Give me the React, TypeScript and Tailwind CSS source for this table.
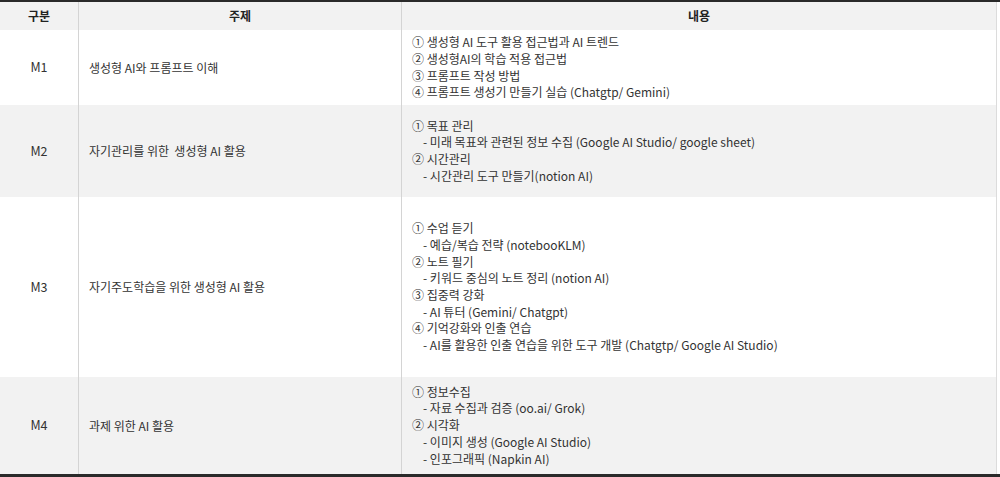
import React from "react";

type Row = { id: string; subject: string; lines: string[]; h: string; bg: string };

const rows: Row[] = [
  {
    id: "M1",
    subject: "생성형 AI와 프롬프트 이해",
    lines: [
      "① 생성형 AI 도구 활용 접근법과 AI 트렌드",
      "② 생성형AI의 학습 적용 접근법",
      "③ 프롬프트 작성 방법",
      "④ 프롬프트 생성기 만들기 실습 (Chatgtp/ Gemini)",
    ],
    h: "h-[75px]",
    bg: "bg-white",
  },
  {
    id: "M2",
    subject: "자기관리를 위한  생성형 AI 활용",
    lines: [
      "① 목표 관리",
      "- 미래 목표와 관련된 정보 수집 (Google AI Studio/ google sheet)",
      "② 시간관리",
      "- 시간관리 도구 만들기(notion AI)",
    ],
    h: "h-[92px]",
    bg: "bg-[#f2f2f2]",
  },
  {
    id: "M3",
    subject: "자기주도학습을 위한 생성형 AI 활용",
    lines: [
      "① 수업 듣기",
      "- 예습/복습 전략 (notebooKLM)",
      "② 노트 필기",
      "- 키워드 중심의 노트 정리 (notion AI)",
      "③ 집중력 강화",
      "- AI 튜터 (Gemini/ Chatgpt)",
      "④ 기억강화와 인출 연습",
      "- AI를 활용한 인출 연습을 위한 도구 개발 (Chatgtp/ Google AI Studio)",
    ],
    h: "h-[180px]",
    bg: "bg-white",
  },
  {
    id: "M4",
    subject: "과제 위한 AI 활용",
    lines: [
      "① 정보수집",
      "- 자료 수집과 검증 (oo.ai/ Grok)",
      "② 시각화",
      "- 이미지 생성 (Google AI Studio)",
      "- 인포그래픽 (Napkin AI)",
    ],
    h: "h-[97px]",
    bg: "bg-[#f2f2f2]",
  },
];

export default function App() {
  return (
    <div
      className="w-[1000px] h-[477px] bg-white text-[#333] text-[12px] overflow-hidden"
      style={{ fontFamily: '"Noto Sans CJK KR", "Noto Sans", sans-serif' }}
    >
      <div className="border-t-2 border-b-[3px] border-[#2a2a2a]">
        <div className="w-[997px] border-r border-[#dcdcdc]">
          <div className="grid grid-cols-[79px_323px_1fr] h-[28px] bg-[#f2f2f2] font-bold text-[#222]">
            <div className="flex items-center justify-center border-r border-[#d4d4d4]">구분</div>
            <div className="flex items-center justify-center border-r border-[#d4d4d4]">주제</div>
            <div className="flex items-center justify-center">내용</div>
          </div>
          {rows.map((r) => (
            <div key={r.id} className={`grid grid-cols-[79px_323px_1fr] ${r.h} ${r.bg}`}>
              <div className="flex items-center justify-center border-r border-[#d4d4d4] text-[12.5px]">{r.id}</div>
              <div className="flex items-center pl-[10px] border-r border-[#d4d4d4] whitespace-pre">
                {r.subject}
              </div>
              <div className="flex flex-col justify-center pl-[10px]">
                {r.lines.map((l, i) => (
                  <div
                    key={i}
                    className={`leading-[16.7px] whitespace-pre ${l.startsWith("-") ? "pl-[11px]" : ""}`}
                  >
                    {l}
                  </div>
                ))}
              </div>
            </div>
          ))}
        </div>
      </div>
    </div>
  );
}
